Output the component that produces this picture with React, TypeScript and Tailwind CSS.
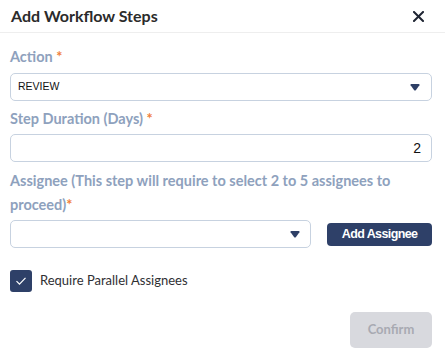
import React from 'react';

function Caret() {
  return (
    <svg width="10" height="7" viewBox="0 0 10 7" className="shrink-0">
      <path d="M0.6 1.2 Q0 0 1.4 0 H8.6 Q10 0 9.4 1.2 L5.8 6.2 Q5 7 4.2 6.2 Z" fill="#2e3f66" />
    </svg>
  );
}

function Label({ children }: { children: React.ReactNode }) {
  return (
    <div className="text-[14.5px] font-bold leading-[24px] text-[#8ea1bd]">
      {children}
      <span className="text-[#f07f3c]">*</span>
    </div>
  );
}

export default function App() {
  return (
    <div className="w-[445px] h-[358px] bg-white font-['Lato',sans-serif] text-[#333]">
      <div className="flex items-center justify-between h-[33px] pl-[11px] pr-[21px] border-b border-[#eeeeee]">
        <h1 className="text-[16px] font-bold text-[#2b2b2b]">Add Workflow Steps</h1>
        <svg width="11" height="11" viewBox="0 0 11 11">
          <path d="M1 1 L10 10 M10 1 L1 10" stroke="#1f2533" strokeWidth="2" strokeLinecap="square" />
        </svg>
      </div>

      <div className="px-[10px] pt-[12px] pr-[13px]">
        <Label>Action </Label>
        <div className="mt-[4px] flex items-center justify-between h-[28px] rounded-[5px] border border-[#c7d2e0] pl-[7px] pr-[11px]">
          <span className="font-['Liberation_Sans',sans-serif] text-[10.5px] text-[#111]">REVIEW</span>
          <Caret />
        </div>

        <div className="mt-[6px]">
          <Label>Step Duration (Days) </Label>
        </div>
        <div className="mt-[3px] flex items-center justify-end h-[28px] rounded-[5px] border border-[#c7d2e0] pr-[10px]">
          <span className="font-['Liberation_Sans',sans-serif] text-[14px] text-[#111]">2</span>
        </div>

        <div className="mt-[7px]">
          <Label>Assignee (This step will require to select 2 to 5 assignees to proceed)</Label>
        </div>
        <div className="mt-[3px] flex items-center gap-[16px]">
          <div className="flex items-center justify-end w-[302px] h-[28px] rounded-[5px] border border-[#c7d2e0] pr-[10px]">
            <Caret />
          </div>
          <button className="w-[105px] h-[23px] rounded-[4px] bg-[#2e4068] text-white font-['Liberation_Sans',sans-serif] font-bold text-[12.5px] tracking-[-0.6px]">
            Add Assignee
          </button>
        </div>

        <div className="mt-[22px] flex items-center gap-[8px]">
          <div className="w-[22px] h-[22px] rounded-[3px] bg-[#2e4068] flex items-center justify-center">
            <svg width="12" height="10" viewBox="0 0 12 10">
              <path d="M1.5 5.2 L4.5 8.2 L10.5 1.8" stroke="white" strokeWidth="1.2" fill="none" />
            </svg>
          </div>
          <span className="text-[13px] text-[#2f2f33]">Require Parallel Assignees</span>
        </div>

        <div className="mt-[20px] flex justify-end">
          <button className="w-[82px] h-[36px] rounded-[5px] bg-[#d8d9de] text-[#a8aab2] font-bold text-[13px]">
            Confirm
          </button>
        </div>
      </div>
    </div>
  );
}
